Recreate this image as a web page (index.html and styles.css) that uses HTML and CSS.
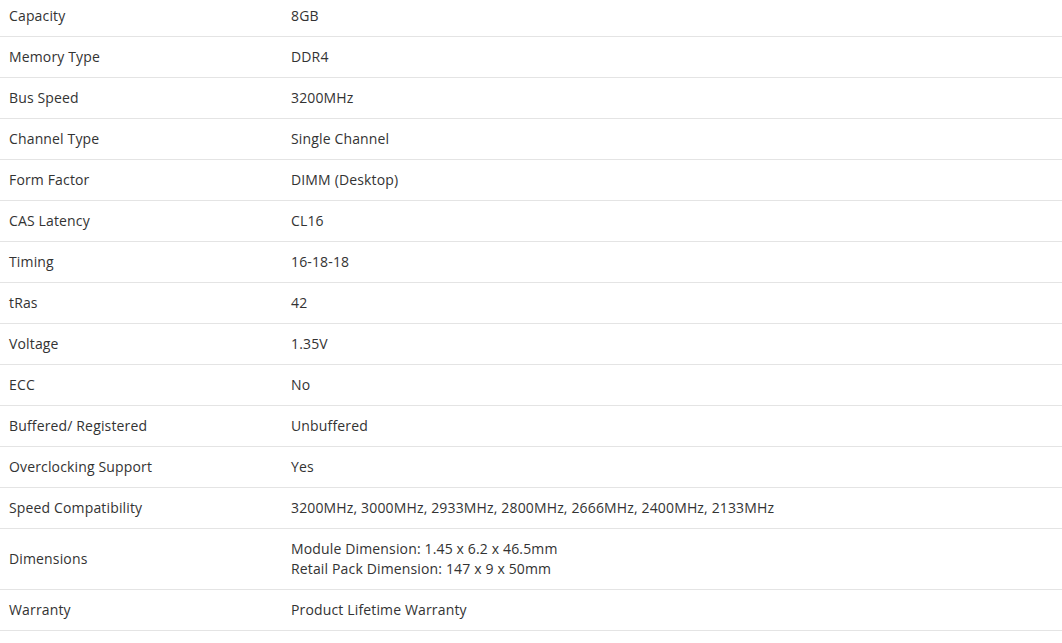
FILE: index.html
```html
<!DOCTYPE html>
<html>
<head>
<meta charset="utf-8">
<link rel="stylesheet" href="styles.css">
</head>
<body>
<div class="specs">
<table class="spec-table">
  <colgroup><col class="col-label"><col class="col-value"></colgroup>
  <tbody>
    <tr><td>Capacity</td><td>8GB</td></tr>
    <tr><td>Memory Type</td><td>DDR4</td></tr>
    <tr><td>Bus Speed</td><td>3200MHz</td></tr>
    <tr><td>Channel Type</td><td>Single Channel</td></tr>
    <tr><td>Form Factor</td><td>DIMM (Desktop)</td></tr>
    <tr><td>CAS Latency</td><td>CL16</td></tr>
    <tr><td>Timing</td><td>16-18-18</td></tr>
    <tr><td>tRas</td><td>42</td></tr>
    <tr><td>Voltage</td><td>1.35V</td></tr>
    <tr><td>ECC</td><td>No</td></tr>
    <tr><td>Buffered/ Registered</td><td>Unbuffered</td></tr>
    <tr><td>Overclocking Support</td><td>Yes</td></tr>
    <tr><td>Speed Compatibility</td><td>3200MHz, 3000MHz, 2933MHz, 2800MHz, 2666MHz, 2400MHz, 2133MHz</td></tr>
    <tr><td>Dimensions</td><td>Module Dimension: 1.45 x 6.2 x 46.5mm<br>Retail Pack Dimension: 147 x 9 x 50mm</td></tr>
    <tr><td>Warranty</td><td>Product Lifetime Warranty</td></tr>
  </tbody>
</table>
</div>
</body>
</html>
```
FILE: styles.css
```css
html, body {
  margin: 0;
  padding: 0;
  background: #ffffff;
}
.specs {
  margin-top: -4px;
}
.spec-table {
  width: 1062px;
  border-collapse: collapse;
  table-layout: fixed;
  font-family: "Open Sans", sans-serif;
  font-size: 14px;
  line-height: 20px;
  letter-spacing: 0.15px;
  color: #333333;
}
.col-label { width: 282px; }
.spec-table td {
  padding: 10px 9px;
  border-bottom: 1px solid #e4e4e4;
  vertical-align: middle;
  text-align: left;
}
```
